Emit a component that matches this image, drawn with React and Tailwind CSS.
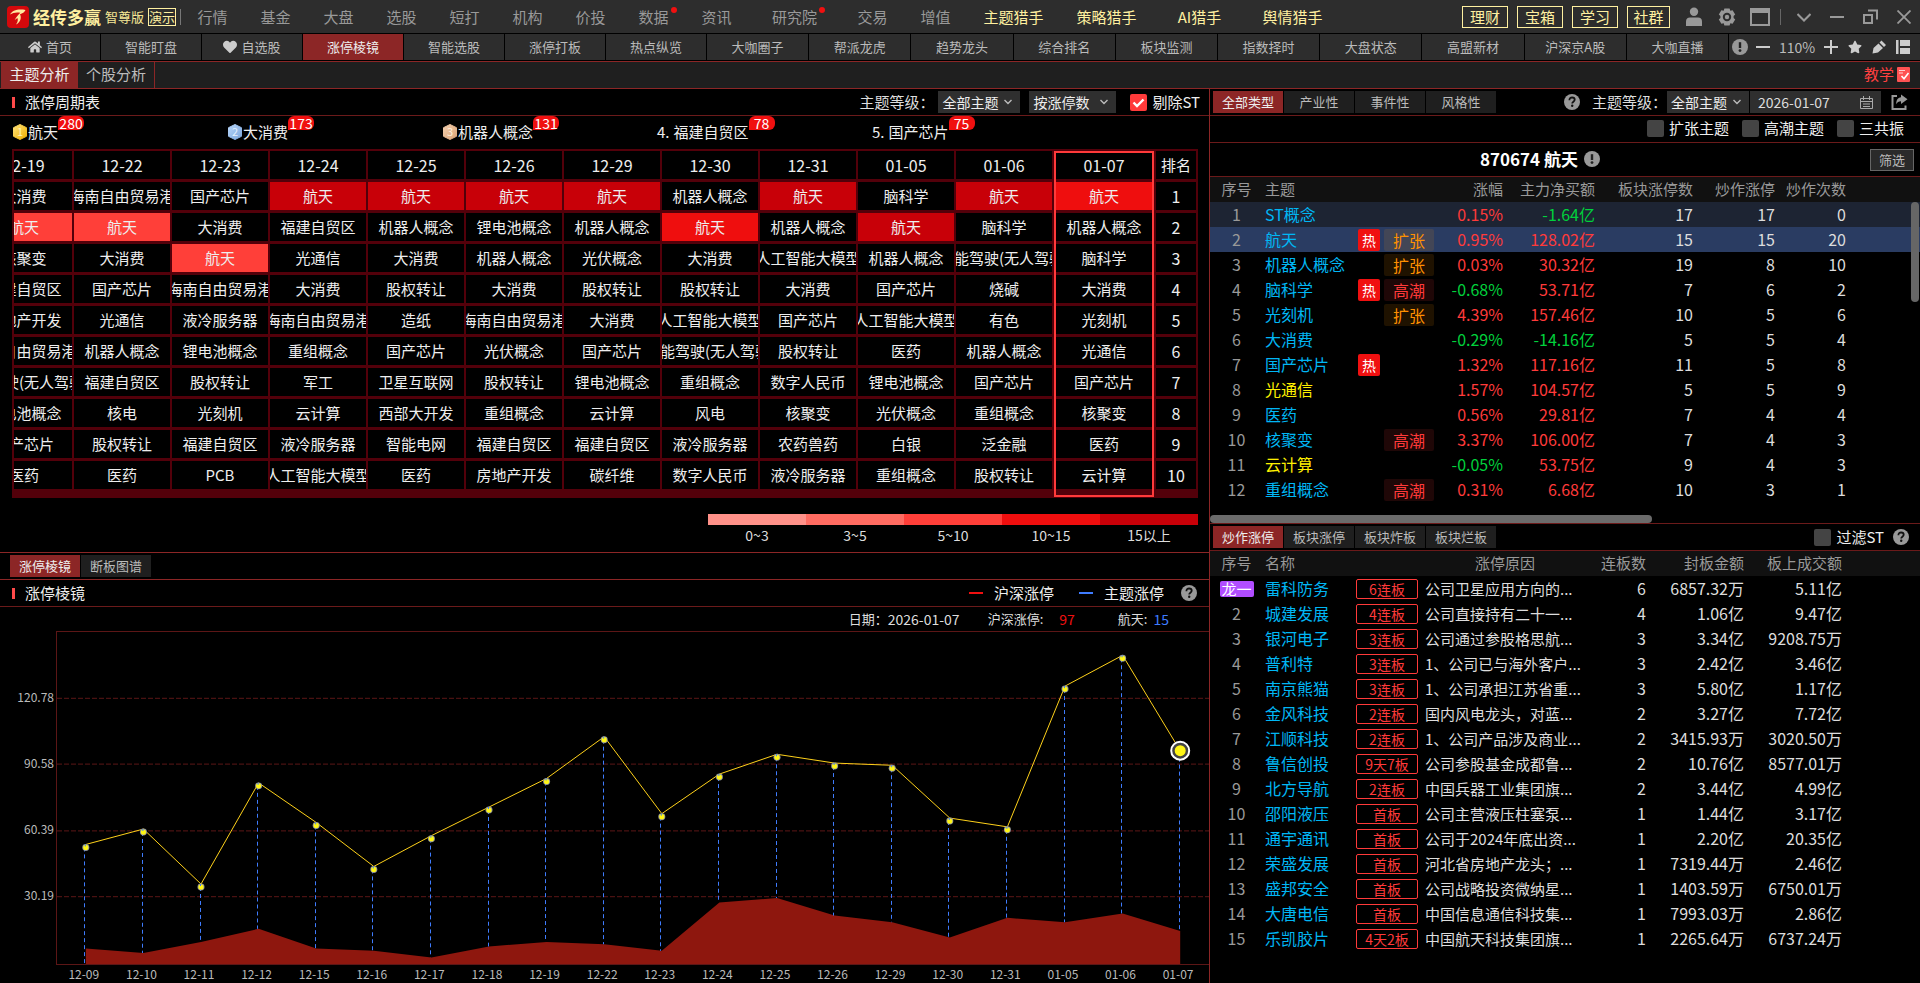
import { FaHeart, FaHome, FaStar } from 'react-icons/fa'

const mainMenu = [
  { label: '行情' },
  { label: '基金' },
  { label: '大盘' },
  { label: '选股' },
  { label: '短打' },
  { label: '机构' },
  { label: '价投' },
  { label: '数据', dot: true },
  { label: '资讯' },
  { label: '研究院', dot: true, wide: true },
  { label: '交易' },
  { label: '增值' },
  { label: '主题猎手', wide: true, gold: true },
  { label: '策略猎手', wide: true, gold: true },
  { label: 'AI猎手', wide: true, gold: true },
  { label: '舆情猎手', wide: true, gold: true },
]

const shortcuts = ['理财', '宝箱', '学习', '社群']

const subMenu = [
  '首页', '智能盯盘', '自选股', '涨停棱镜', '智能选股', '涨停打板', '热点纵览', '大咖圈子', '帮派龙虎',
  '趋势龙头', '综合排名', '板块监测', '指数择时', '大盘状态', '高盟新材', '沪深京A股', '大咖直播',
]

const leaders = [
  { name: '航天', count: 280, from: '#ffe27a', to: '#eeb000', digit: '#fff3b8' },
  { name: '大消费', count: 173, from: '#b9d7fb', to: '#7ba6dc', digit: '#e3f0ff' },
  { name: '机器人概念', count: 131, from: '#f3cfae', to: '#dba477', digit: '#ffeeda' },
  { name: '福建自贸区', count: 78 },
  { name: '国产芯片', count: 75 },
]

const LONG_AI = '人工智能大模型'
const LONG_DRIVE = '智能驾驶(无人驾驶)'
const LONG_HAINAN = '海南自由贸易港'

const periods = [
  { date: '12-19', level: 3, themes: ['大消费', '航天', '核聚变', '福建自贸区', '房地产开发', LONG_HAINAN, LONG_DRIVE, '锂电池概念', '国产芯片', '医药'] },
  { date: '12-22', level: 3, themes: [LONG_HAINAN, '航天', '大消费', '国产芯片', '光通信', '机器人概念', '福建自贸区', '核电', '股权转让', '医药'] },
  { date: '12-23', level: 3, themes: ['国产芯片', '大消费', '航天', LONG_HAINAN, '液冷服务器', '锂电池概念', '股权转让', '光刻机', '福建自贸区', 'PCB'] },
  { date: '12-24', level: 5, themes: ['航天', '福建自贸区', '光通信', '大消费', LONG_HAINAN, '重组概念', '军工', '云计算', '液冷服务器', LONG_AI] },
  { date: '12-25', level: 5, themes: ['航天', '机器人概念', '大消费', '股权转让', '造纸', '国产芯片', '卫星互联网', '西部大开发', '智能电网', '医药'] },
  { date: '12-26', level: 5, themes: ['航天', '锂电池概念', '机器人概念', '大消费', LONG_HAINAN, '光伏概念', '股权转让', '重组概念', '福建自贸区', '房地产开发'] },
  { date: '12-29', level: 5, themes: ['航天', '机器人概念', '光伏概念', '股权转让', '大消费', '国产芯片', '锂电池概念', '云计算', '福建自贸区', '碳纤维'] },
  { date: '12-30', level: 4, themes: ['机器人概念', '航天', '大消费', '股权转让', LONG_AI, LONG_DRIVE, '重组概念', '风电', '液冷服务器', '数字人民币'] },
  { date: '12-31', level: 5, themes: ['航天', '机器人概念', LONG_AI, '大消费', '国产芯片', '股权转让', '数字人民币', '核聚变', '农药兽药', '液冷服务器'] },
  { date: '01-05', level: 5, themes: ['脑科学', '航天', '机器人概念', '国产芯片', LONG_AI, '医药', '锂电池概念', '光伏概念', '白银', '重组概念'] },
  { date: '01-06', level: 5, themes: ['航天', '脑科学', LONG_DRIVE, '烧碱', '有色', '机器人概念', '国产芯片', '重组概念', '泛金融', '股权转让'] },
  { date: '01-07', level: 4, themes: ['航天', '机器人概念', '脑科学', '大消费', '光刻机', '光通信', '国产芯片', '核聚变', '医药', '云计算'] },
]

const levelBg = { 3: 'bg-[#ff3f39]', 4: 'bg-[#ef0e0e]', 5: 'bg-[#c80008]' }

const scale = [
  { label: '0~3', bg: 'bg-[#ff9189]' },
  { label: '3~5', bg: 'bg-[#ff6b61]' },
  { label: '5~10', bg: 'bg-[#ff3f39]' },
  { label: '10~15', bg: 'bg-[#ef0e0e]' },
  { label: '15以上', bg: 'bg-[#c80008]' },
]

const themes = [
  { name: 'ST概念', change: '0.15%', net: '-1.64亿', board: 17, hype: 17, times: 0 },
  { name: '航天', hot: true, stage: '扩张', change: '0.95%', net: '128.02亿', board: 15, hype: 15, times: 20 },
  { name: '机器人概念', stage: '扩张', change: '0.03%', net: '30.32亿', board: 19, hype: 8, times: 10 },
  { name: '脑科学', hot: true, stage: '高潮', change: '-0.68%', net: '53.71亿', board: 7, hype: 6, times: 2 },
  { name: '光刻机', stage: '扩张', change: '4.39%', net: '157.46亿', board: 10, hype: 5, times: 6 },
  { name: '大消费', change: '-0.29%', net: '-14.16亿', board: 5, hype: 5, times: 4 },
  { name: '国产芯片', hot: true, change: '1.32%', net: '117.16亿', board: 11, hype: 5, times: 8 },
  { name: '光通信', yellow: true, change: '1.57%', net: '104.57亿', board: 5, hype: 5, times: 9 },
  { name: '医药', change: '0.56%', net: '29.81亿', board: 7, hype: 4, times: 4 },
  { name: '核聚变', stage: '高潮', change: '3.37%', net: '106.00亿', board: 7, hype: 4, times: 3 },
  { name: '云计算', yellow: true, change: '-0.05%', net: '53.75亿', board: 9, hype: 4, times: 3 },
  { name: '重组概念', stage: '高潮', change: '0.31%', net: '6.68亿', board: 10, hype: 3, times: 1 },
]

const stocks = [
  ['雷科防务', '6连板', '公司卫星应用方向的...', 6, '6857.32万', '5.11亿'],
  ['城建发展', '4连板', '公司直接持有二十一...', 4, '1.06亿', '9.47亿'],
  ['银河电子', '3连板', '公司通过参股格思航...', 3, '3.34亿', '9208.75万'],
  ['普利特', '3连板', '1、公司已与海外客户...', 3, '2.42亿', '3.46亿'],
  ['南京熊猫', '3连板', '1、公司承担江苏省重...', 3, '5.80亿', '1.17亿'],
  ['金风科技', '2连板', '国内风电龙头，对蓝...', 2, '3.27亿', '7.72亿'],
  ['江顺科技', '2连板', '1、公司产品涉及商业...', 2, '3415.93万', '3020.50万'],
  ['鲁信创投', '9天7板', '公司参股基金成都鲁...', 2, '10.76亿', '8577.01万'],
  ['北方导航', '2连板', '中国兵器工业集团旗...', 2, '3.44亿', '4.99亿'],
  ['邵阳液压', '首板', '公司主营液压柱塞泵...', 1, '1.44亿', '3.17亿'],
  ['通宇通讯', '首板', '公司于2024年底出资...', 1, '2.20亿', '20.35亿'],
  ['荣盛发展', '首板', '河北省房地产龙头；...', 1, '7319.44万', '2.46亿'],
  ['盛邦安全', '首板', '公司战略投资微纳星...', 1, '1403.59万', '6750.01万'],
  ['大唐电信', '首板', '中国信息通信科技集...', 1, '7993.03万', '2.86亿'],
  ['乐凯胶片', '4天2板', '中国航天科技集团旗...', 1, '2265.64万', '6737.24万'],
]

const chartDays = [
  ['12-09', 53, 7], ['12-10', 60, 5], ['12-11', 35, 10], ['12-12', 81, 16], ['12-15', 63, 7],
  ['12-16', 43, 6], ['12-17', 57, 3], ['12-18', 70, 8], ['12-19', 83, 10], ['12-22', 102, 9],
  ['12-23', 67, 6], ['12-24', 85, 28], ['12-25', 94, 30], ['12-26', 90, 22], ['12-29', 89, 19],
  ['12-30', 65, 12], ['12-31', 61, 21], ['01-05', 125, 19], ['01-06', 139, 23], ['01-07', 97, 15],
]

function HelpIcon({ mark = '?' }) {
  return (
    <svg viewBox="0 0 16 16" className="size-4 shrink-0" aria-hidden="true">
      <circle cx="8" cy="8" r="8" fill="#999" />
      {mark === '?' ? (
        <>
          <path d="M5.4 6.2c0-1.7 1.100-2.700 2.700-2.700s2.600 1 2.600 2.300c0 1.800-2.500 1.900-2.500 3.600" fill="none" stroke="#111" strokeWidth="1.800" />
          <circle cx="8.200" cy="11.800" r="1.200" fill="#111" />
        </>
      ) : (
        <>
          <path d="M6.800 3.200h2.400v5.800H6.800z" fill="#222" />
          <circle cx="8" cy="11.600" r="1.400" fill="#222" />
        </>
      )}
    </svg>
  )
}

function Logo() {
  return (
    <svg viewBox="0 0 22 22" className="mr-1 size-[22px] shrink-0" aria-hidden="true">
      <rect width="22" height="22" rx="4" fill="#d4090c" />
      <path d="M3 8.500C5 4.500 11 2.500 18.500 4c-1 2.200-3 3.600-5.500 4.200 1.800 3.600.4 8.300-4 10.300 1.800-2.400 2.300-4.600 1.400-6.400L7.700 14c1.500-2.500 3.200-5 5.600-7.200C9.600 6 6 6.600 3 8.500z" fill="#ffe9a0" />
    </svg>
  )
}

function Medal({ rank, from, to, digit }) {
  return (
    <svg viewBox="0 0 16 16" className="h-4 w-4" role="img" aria-label={`第${rank}名`}>
      <defs>
        <linearGradient id={`medal-${rank}`} x1="0" y1="0" x2="1" y2="1">
          <stop offset="0" stopColor={from} />
          <stop offset="1" stopColor={to} />
        </linearGradient>
      </defs>
      <path d="M8 0.500l6.500 3.200v8.600L8 15.500l-6.500-3.200V3.700z" fill={`url(#medal-${rank})`} stroke={`url(#medal-${rank})`} strokeLinejoin="round" />
      <text x="8" y="12" textAnchor="middle" fontSize="11" fill={digit}>{rank}</text>
    </svg>
  )
}

function WindowTools() {
  return (
    <div className="flex items-center pl-4 pr-[9px] text-[#999]">
      <button aria-label="账户" className="mr-4">
        <svg viewBox="0 0 16 20" className="h-5 w-4" fill="currentColor">
          <circle cx="8" cy="4.700" r="4.200" />
          <path d="M0 19v-4.500c0-2.500 1.500-4 4-4h8c2.500 0 4 1.500 4 4V19z" />
        </svg>
      </button>
      <button aria-label="设置" className="mr-3.5">
        <svg viewBox="0 0 18 18" className="size-[18px]" fill="currentColor">
          <path fillRule="evenodd" d="M6.400 0.500h5.200l.7 2.200 2.300-.5 2.600 4.300-1.600 1.600v1.800l1.600 1.600-2.600 4.300-2.300-.5-.7 2.200H6.400l-.7-2.200-2.300.5L.8 11.500l1.600-1.600V8.100L.8 6.500l2.600-4.300 2.300.5zM9 4.800a4.200 4.200 0 100 8.400 4.200 4.200 0 000-8.400z" />
          <circle cx="9" cy="9" r="2.200" />
        </svg>
      </button>
      <button aria-label="窗口" className="mr-2.5">
        <svg viewBox="0 0 20 18" className="h-[18px] w-5">
          <path d="M1 1h18v16H1z" fill="none" stroke="currentColor" strokeWidth="2" />
          <path d="M0 0h20v5H0z" fill="currentColor" />
        </svg>
      </button>
      <span className="mr-4 h-4 w-px bg-[#666]" />
      <button aria-label="更多" className="mr-[19px]">
        <svg viewBox="0 0 14 14" className="size-3.5" fill="none" stroke="currentColor" strokeWidth="2">
          <path d="M0.500 4l6.500 6.500L13.500 4" />
        </svg>
      </button>
      <button aria-label="最小化" className="mr-[19px]">
        <svg viewBox="0 0 14 14" className="size-3.5" fill="none" stroke="currentColor" strokeWidth="2">
          <path d="M0 7h14" />
        </svg>
      </button>
      <button aria-label="还原" className="mr-[19px]">
        <svg viewBox="0 0 15 15" className="size-[15px]" fill="none" stroke="currentColor" strokeWidth="2">
          <path d="M1 6h8v8H1zM5 1.500h9v9" />
        </svg>
      </button>
      <button aria-label="关闭">
        <svg viewBox="0 0 14 14" className="size-3.5" fill="none" stroke="currentColor" strokeWidth="1.800">
          <path d="M0.500 0.500l13 13M13.500 0.500l-13 13" />
        </svg>
      </button>
    </div>
  )
}

function TopBar() {
  return (
    <header className="flex h-[33px] items-center bg-[#2d2d2d] pl-[7px]">
      <Logo />
      <h1 className="text-[17px] leading-5 font-bold text-[#fff0a0]">经传多赢</h1>
      <span className="ml-1 text-[13px] text-[#f7e896]">智尊版</span>
      <span className="ml-1 flex h-[18px] w-7 items-center justify-center border border-[#fff0a0] text-[13px] text-[#fff0a0]">演示</span>
      <span className="ml-1 h-4 w-px bg-[#777]" />
      <nav className="flex text-[15px] text-[#999]">
        {mainMenu.map((item) => (
          <a key={item.label} href="#" className={`flex justify-center ${item.wide ? 'w-[93px]' : 'w-[63px]'} ${item.gold ? 'text-[#fff0a0]' : ''}`}>
            <span className="relative">
              {item.label}
              {item.dot && <span className="absolute -right-2 top-0 size-1.5 rounded-full bg-[#f01010]" />}
            </span>
          </a>
        ))}
      </nav>
      <div className="ml-auto flex gap-[9px]">
        {shortcuts.map((label) => (
          <button
            key={label}
            className={`h-[22px] border border-[#fff0a0] text-[15px] leading-5 text-[#fff0a0] ${label === '社群' ? 'w-[43px]' : 'w-[46px]'}`}
          >
            {label}
          </button>
        ))}
      </div>
      <WindowTools />
    </header>
  )
}

function SubMenu() {
  return (
    <div className="mt-px flex h-[26px] gap-px">
      <nav className="flex flex-1 gap-px text-[13px] text-[#bbb]">
        {subMenu.map((label, i) => (
          <a
            key={label}
            href="#"
            className={`flex items-center justify-center gap-1 ${i < 7 ? 'w-[100px]' : 'flex-1'} ${label === '涨停棱镜' ? 'bg-[#8c2626] text-[#eee]' : 'bg-[#2d2d2d]'}`}
          >
            {label === '首页' && <FaHome className="size-3.5 text-[#ccc]" />}
            {label === '自选股' && <FaHeart className="size-3.5 text-[#ccc]" />}
            {label}
          </a>
        ))}
      </nav>
      <div className="flex w-[191px] items-center bg-[#2d2d2d] pl-[3px] text-[#ccc]">
        <HelpIcon mark="!" />
        <button aria-label="缩小" className="ml-2">
          <svg viewBox="0 0 14 14" className="size-3.5"><path d="M0 7h14" stroke="currentColor" strokeWidth="2" /></svg>
        </button>
        <span className="w-[54px] text-center text-sm text-[#bbb]">110%</span>
        <button aria-label="放大">
          <svg viewBox="0 0 14 14" className="size-3.5"><path d="M0 7h14M7 0v14" stroke="currentColor" strokeWidth="2" /></svg>
        </button>
        <button aria-label="收藏" className="ml-2.5"><FaStar className="size-3.5" /></button>
        <button aria-label="画笔" className="ml-2.5">
          <svg viewBox="0 0 14 14" className="size-3.5" fill="currentColor">
            <path d="M0.500 13.500L1.500 8l5-4.500 4.500 4.500-5 4.500zM7.500 2.500L9.500 0.500 14 5 12 7z" />
          </svg>
        </button>
        <button aria-label="布局" className="ml-2.5">
          <svg viewBox="0 0 14 14" className="size-3.5" fill="currentColor">
            <path d="M0 0h2.500v14H0zM4 0h10v6H4zM4 8h10v6H4z" />
          </svg>
        </button>
      </div>
    </div>
  )
}

function PageTabs() {
  return (
    <div className="mt-px flex h-7 items-center border-y border-[#8c2626] bg-[#1f1f1f] pl-px text-[15px]">
      <button className="h-full w-[77px] bg-[#8c2626] pb-0.5 text-[#eee]">主题分析</button>
      <button className="h-full w-[77px] border-r border-[#8c2626] pb-0.5 text-[#bbb]">个股分析</button>
      <a href="#" className="ml-auto mr-2.5 flex items-center gap-[3px] pb-0.5 text-[#ff4040]">
        教学
        <svg viewBox="0 0 13 15" className="h-[15px] w-[13px]" aria-hidden="true">
          <rect width="13" height="15" rx="1" fill="#ff5252" />
          <path d="M2 3.500h6M2 6h4" stroke="#ffd0d0" strokeWidth="1.200" />
          <path d="M4.500 9l2.500 2.800L11.500 6" fill="none" stroke="#fff" strokeWidth="1.600" />
        </svg>
      </a>
    </div>
  )
}

function PanelTitle({ children }) {
  return (
    <h2 className="flex items-center gap-2.5 pl-3 text-[15px] text-[#eee]">
      <span className="h-[11px] w-[3px] bg-[#ff4a4a]" />
      {children}
    </h2>
  )
}

function Select({ label, value, width }) {
  return (
    <span className={`relative block h-[22px] ${width}`}>
      <select aria-label={label} defaultValue={value} className="h-full w-full appearance-none bg-[#2f2f2f] pl-1 text-sm leading-[22px] text-[#eee] outline-none">
        <option>{value}</option>
      </select>
      <svg viewBox="0 0 8 6" className="pointer-events-none absolute right-2 top-2 h-1.5 w-2" fill="none" stroke="#bbb" strokeWidth="1.400">
        <path d="M0.500 1L4 4.500 7.500 1" />
      </svg>
    </span>
  )
}

function CheckBox({ label, checked }) {
  return (
    <label className="flex items-center gap-[5px] text-[15px] text-[#eee]">
      <span className="relative size-[17px]">
        <input type="checkbox" defaultChecked={checked} className="peer block size-[17px] appearance-none rounded-xs bg-[#444] checked:bg-[#ff3a3a]" />
        <svg viewBox="0 0 17 17" className="pointer-events-none absolute left-0 top-0 hidden size-[17px] peer-checked:block" fill="none" stroke="#fff" strokeWidth="2.400">
          <path d="M3.500 8.500L7 12l6.500-6.500" />
        </svg>
      </span>
      {label}
    </label>
  )
}

function TabRow({ tabs }) {
  return (
    <div className="flex gap-px text-[13px]">
      {tabs.map((tab, i) => (
        <button key={tab} className={`h-[22px] w-[70px] ${i === 0 ? 'bg-[#8c2626] text-[#eee]' : 'bg-[#1f1f1f] text-[#bbb]'}`}>
          {tab}
        </button>
      ))}
    </div>
  )
}

function LeaderRow() {
  return (
    <ul className="flex h-[33px] pl-3 text-[15px] text-[#eee]">
      {leaders.map((item, i) => (
        <li key={item.name} className="flex w-[215px] items-center pb-0.5">
          {item.from ? (
            <Medal rank={i + 1} from={item.from} to={item.to} digit={item.digit} />
          ) : (
            <span className="mr-1">{i + 1}.</span>
          )}
          {item.name}
          <span className="min-w-[26px] self-start rounded-md rounded-bl-none bg-[#f01010] px-px text-center text-sm leading-[14px] text-white">
            {item.count}
          </span>
        </li>
      ))}
    </ul>
  )
}

function PeriodTable() {
  const cell = 'h-[31px] border-r-2 border-b-[3px] border-[#53000a] p-0'
  return (
    <div className="relative mx-3 mr-[11px] flex justify-end overflow-hidden border-t-2 border-l-2 border-[#53000a] bg-[#53000a] pb-1.5">
      <table className="w-[1222px] shrink-0 table-fixed border-separate border-spacing-0 text-[15px] leading-5 text-[#eee]">
        <thead>
          <tr>
            {periods.map((p) => (
              <th key={p.date} className={`${cell} bg-black text-base font-normal ${p.date === '01-07' ? 'w-[102px]' : 'w-[98px]'}`}>
                {p.date}
              </th>
            ))}
            <th className={`${cell} w-[42px] bg-black font-normal`}>排名</th>
          </tr>
        </thead>
        <tbody>
          {periods[0].themes.map((_, row) => (
            <tr key={row}>
              {periods.map((p) => (
                <td key={p.date} className={`${cell} ${p.themes[row] === '航天' ? levelBg[p.level] : 'bg-black'}`}>
                  <div className="flex justify-center overflow-hidden whitespace-nowrap">{p.themes[row]}</div>
                </td>
              ))}
              <td className={`${cell} bg-black text-center text-base`}>{row + 1}</td>
            </tr>
          ))}
        </tbody>
      </table>
      <div className="pointer-events-none absolute top-0 right-11 bottom-px w-[100px] border-2 border-[#ff3a3a]" />
    </div>
  )
}

function ScaleLegend() {
  return (
    <div className="mt-4 mr-[11px] flex h-[38px] justify-end text-center text-sm leading-5 text-[#ddd]">
      {scale.map((s) => (
        <div key={s.label} className="w-[98px]">
          <div className={`h-[11px] ${s.bg}`} />
          {s.label}
        </div>
      ))}
    </div>
  )
}

function TrendChart() {
  const width = 1152
  const height = 333
  const step = width / chartDays.length
  const x = (i) => step / 2 + step * i
  const y = (v) => height - (v * height) / 150.97
  const last = chartDays.length - 1
  const line = chartDays.map(([, v], i) => `${x(i)},${i === last ? y(v) : y(v) - 3}`).join(' ')
  const area = chartDays.map(([, , v], i) => `${x(i)},${y(v)}`).join(' ')

  return (
    <div className="flex flex-1 flex-col">
      <div className="flex flex-1">
        <div className="grid w-14 grid-rows-5 pr-0.5 pb-1 text-right text-xs leading-4 text-[#bbb]">
          {['120.78', '90.58', '60.39', '30.19'].map((v) => (
            <span key={v} className="translate-y-1/2 self-end">{v}</span>
          ))}
        </div>
        <div className="flex-1 border-y border-l border-[#5c1616]">
          <svg viewBox={`0 0 ${width} ${height}`} preserveAspectRatio="none" className="block h-[332px] w-full" role="img" aria-label="涨停棱镜走势">
            {[1, 2, 3, 4].map((n) => (
              <path key={n} d={`M0 ${Math.round((height / 5) * n) - 0.5}H${width}`} stroke="#5c1616" strokeDasharray="5 2" />
            ))}
            <polygon points={`${x(0)},${height} ${area} ${x(last)},${height}`} fill="#8e170e" />
            {chartDays.map(([date, v, t], i) => (
              <path key={date} d={`M${Math.floor(x(i)) - 0.5} ${y(v)}V${i ? y(t) : height}`} stroke="#3f7cff" strokeDasharray="4 3" />
            ))}
            <polyline points={line} fill="none" stroke="#ffd21a" />
            {chartDays.slice(0, last).map(([date, v], i) => (
              <g key={date}>
                <circle cx={x(i)} cy={y(v)} r="3.500" fill="#8f9399" />
                <circle cx={x(i)} cy={y(v)} r="2.600" fill="#fff615" />
                <path d={`M${x(i) - 0.5} ${y(v) - 3}v2`} stroke="#3f7cff" />
              </g>
            ))}
            <circle cx={x(last)} cy={y(97)} r="9" fill="#444" stroke="#fff" strokeWidth="2" />
            <circle cx={x(last)} cy={y(97)} r="5.500" fill="#fff615" />
          </svg>
        </div>
      </div>
      <div className="flex h-[18px] pl-[55px] pr-0.5 text-center text-xs leading-[18px] text-[#bbb]">
        {chartDays.map(([date]) => (
          <span key={date} className="flex-1">{date}</span>
        ))}
      </div>
    </div>
  )
}

function LeftPanel() {
  return (
    <main className="flex min-w-0 flex-1 flex-col">
      <div className="flex h-[27px] items-center border-b border-[#6b1a1a]">
        <PanelTitle>涨停周期表</PanelTitle>
        <div className="ml-auto flex items-center pr-[9px]">
          <span className="mr-1 text-[15px] text-[#ddd]">主题等级：</span>
          <Select label="主题等级" value="全部主题" width="w-[82px]" />
          <span className="w-[9px]" />
          <Select label="排序方式" value="按涨停数" width="w-[87px]" />
          <span className="w-3.5" />
          <CheckBox label="剔除ST" checked />
        </div>
      </div>
      <LeaderRow />
      <PeriodTable />
      <ScaleLegend />
      <div className="flex h-7 items-center border-y border-[#8c2626] pl-2.5">
        <TabRow tabs={['涨停棱镜', '断板图谱']} />
      </div>
      <div className="flex h-[27px] items-center border-b border-[#6b1a1a] text-[15px] text-[#eee]">
        <PanelTitle>涨停棱镜</PanelTitle>
        <span className="ml-auto mr-[11px] h-0.5 w-3.5 bg-[#f01010]" />
        沪深涨停
        <span className="ml-[25px] mr-[11px] h-0.5 w-3.5 bg-[#3f7cff]" />
        主题涨停
        <span className="ml-[17px] mr-3"><HelpIcon /></span>
      </div>
      <div className="flex h-6 items-center justify-end pr-10 text-[13px] text-[#ddd]">
        日期：<span className="mr-7 text-sm">2026-01-07</span>
        沪深涨停:<span className="ml-4 mr-[43px] text-sm text-[#f01010]">97</span>
        航天:<span className="ml-1.5 text-sm text-[#3f7cff]">15</span>
      </div>
      <TrendChart />
    </main>
  )
}

function ThemeTable() {
  return (
    <table className="w-full table-fixed text-base leading-[25px] text-[#ddd]">
      <thead className="bg-[#111] text-[15px] leading-[23px] text-[#999]">
        <tr className="h-[25px] text-right align-top">
          <th className="w-[53px] text-center font-normal">序号</th>
          <th className="w-[93px] pl-0.5 text-left font-normal">主题</th>
          <th className="w-20" />
          <th className="w-[67px] font-normal">涨幅</th>
          <th className="w-[92px] font-normal">主力净买额</th>
          <th className="w-[98px] font-normal">板块涨停数</th>
          <th className="w-[82px] font-normal">炒作涨停</th>
          <th className="w-[71px] font-normal">炒作次数</th>
          <th />
        </tr>
      </thead>
      <tbody>
        {themes.map((t, i) => (
          <tr key={t.name} className={`h-[25px] text-right ${i === 0 ? 'bg-[#1d2433]' : i === 1 ? 'bg-[#2a3c62]' : ''}`}>
            <td className="text-center text-[#999]">{i + 1}</td>
            <td className={`pl-0.5 text-left whitespace-nowrap ${t.yellow ? 'text-[#fff000]' : 'text-[#00b7f5]'}`}>{t.name}</td>
            <td>
              <div className="flex justify-end gap-1 pr-0.5 leading-[22px]">
                {t.hot && <span className="w-[22px] rounded-xs bg-[#f01010] text-center text-sm leading-[22px] text-white">热</span>}
                {t.stage ? (
                  <span className={`w-[50px] rounded-xs text-center ${t.stage === '扩张' ? 'bg-[#ff9500]/12 text-[#ff9000]' : 'bg-[#ff3a3a]/12 text-[#ff3a3a]'}`}>{t.stage}</span>
                ) : (
                  <span className="w-[50px]" />
                )}
              </div>
            </td>
            <td className={t.change.startsWith('-') ? 'text-[#00d13c]' : 'text-[#ff3a3a]'}>{t.change}</td>
            <td className={t.net.startsWith('-') ? 'text-[#00d13c]' : 'text-[#ff3a3a]'}>{t.net}</td>
            <td>{t.board}</td>
            <td>{t.hype}</td>
            <td>{t.times}</td>
            <td />
          </tr>
        ))}
      </tbody>
    </table>
  )
}

function StockTable() {
  return (
    <table className="w-full table-fixed text-base leading-[25px] text-[#ddd]">
      <thead className="bg-[#111] text-[15px] leading-[23px] text-[#999]">
        <tr className="h-[25px] text-right align-top">
          <th className="w-[53px] text-center font-normal">序号</th>
          <th className="w-[93px] pl-0.5 text-left font-normal">名称</th>
          <th className="w-[69px]" />
          <th className="w-40 text-center font-normal">涨停原因</th>
          <th className="w-[61px] font-normal">连板数</th>
          <th className="w-[98px] font-normal">封板金额</th>
          <th className="w-[98px] font-normal">板上成交额</th>
          <th />
        </tr>
      </thead>
      <tbody>
        {stocks.map(([name, tag, reason, boards, sealed, turnover], i) => (
          <tr key={name} className="h-[25px] text-right">
            <td className="text-center text-[#999]">
              {i === 0 ? (
                <span className="mx-auto block w-[34px] rounded-xs bg-[#b14dff] text-[15px] leading-4 text-white">龙一</span>
              ) : (
                i + 1
              )}
            </td>
            <td className="pl-0.5 text-left text-[#00b7f5]">{name}</td>
            <td>
              <span className="block h-5 w-[62px] rounded-xs border border-[#ff3a3a] text-center text-sm leading-[18px] text-[#ff3a3a]">{tag}</span>
            </td>
            <td className="text-left text-[15px] whitespace-nowrap">{reason}</td>
            <td>{boards}</td>
            <td>{sealed}</td>
            <td>{turnover}</td>
            <td />
          </tr>
        ))}
      </tbody>
    </table>
  )
}

function RightPanel() {
  return (
    <aside className="w-[711px] shrink-0 border-l border-[#8c2626]">
      <div className="flex h-[27px] items-center border-b border-[#6b1a1a] pl-[3px]">
        <TabRow tabs={['全部类型', '产业性', '事件性', '风格性']} />
        <div className="ml-auto flex items-center pr-3">
          <HelpIcon />
          <span className="ml-3 text-[15px] text-[#ddd]">主题等级：</span>
          <Select label="主题等级" value="全部主题" width="w-[82px]" />
          <label className="ml-px flex h-[22px] w-[131px] items-center bg-[#2f2f2f] pr-2">
            <input type="text" aria-label="日期" defaultValue="2026-01-07" className="w-full min-w-0 bg-transparent pl-2 text-sm text-[#ddd] outline-none" />
            <svg viewBox="0 0 13 13" className="size-[13px] shrink-0" fill="none" stroke="#aaa">
              <path d="M0.500 2.500h12v10H0.500zM0.500 5.500h12M3.500 0v4M9.500 0v4M3 8h7M3 10.500h7" />
            </svg>
          </label>
          <button aria-label="导出" className="ml-2.5">
            <svg viewBox="0 0 17 16" className="h-4 w-[17px]">
              <path d="M6 2H1.500v13h13v-3.500" fill="none" stroke="#999" strokeWidth="2" />
              <path d="M10 0.500l6.500 4.800L10 10V7.300c-2.400 0-3.800.9-4.800 3 0-4.200 1.600-6.700 4.800-7z" fill="#999" />
            </svg>
          </button>
        </div>
      </div>
      <div className="flex h-[27px] items-center justify-end gap-[13px] border-b border-[#6b1a1a] pr-4 pb-0.5">
        <CheckBox label="扩张主题" />
        <CheckBox label="高潮主题" />
        <CheckBox label="三共振" />
      </div>
      <div className="flex h-[34px] items-center border-b border-[#6b1a1a] pr-1.5">
        <h2 className="flex flex-1 items-center justify-center gap-1.5 pb-0.5 text-[17px] leading-6 font-bold text-white">
          870674 航天
          <HelpIcon mark="!" />
        </h2>
        <button className="h-[22px] w-11 border border-[#666] bg-[#2a2a2a] text-[13px] text-[#bbb]">筛选</button>
      </div>
      <div className="relative h-[346px]">
        <ThemeTable />
        <div className="absolute top-[25px] right-px h-[100px] w-2 rounded-sm bg-[#666]" />
        <div className="absolute bottom-0 left-0 h-2 w-[442px] rounded-sm bg-[#6b6b6b]" />
      </div>
      <div className="flex h-7 items-center justify-between border-y border-[#6b1a1a] pl-[3px] pr-[11px]">
        <TabRow tabs={['炒作涨停', '板块涨停', '板块炸板', '板块烂板']} />
        <div className="flex items-center gap-[9px]">
          <CheckBox label="过滤ST" />
          <HelpIcon />
        </div>
      </div>
      <StockTable />
    </aside>
  )
}

export default function App() {
  return (
    <div className="flex min-h-screen flex-col bg-black font-['Noto_Sans_CJK_SC',sans-serif] leading-5">
      <TopBar />
      <SubMenu />
      <PageTabs />
      <div className="flex flex-1">
        <LeftPanel />
        <RightPanel />
      </div>
    </div>
  )
}
